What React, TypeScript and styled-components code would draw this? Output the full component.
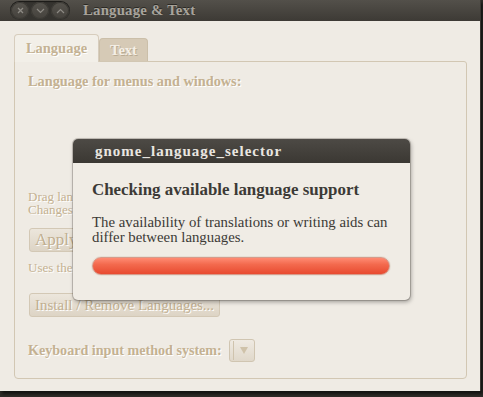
import styled, { createGlobalStyle } from "styled-components";

const GlobalStyle = createGlobalStyle`
  html, body {
    margin: 0;
    padding: 0;
    background: #2f2c28;
  }
  body {
    font-family: "Liberation Serif", "DejaVu Serif", serif;
  }
`;

//#region Window
const Screen = styled.div`
  width: 483px;
  height: 397px;
  position: relative;
  overflow: hidden;
  background: #2f2c28;
`;

const Window = styled.div`
  width: 480px;
  height: 391px;
  background: #efebe4;
  display: flex;
  flex-direction: column;
  border-right: 1px solid #3a3631;
  box-shadow: 2px 3px 3px rgba(0, 0, 0, 0.6);
`;

const TitleBar = styled.div`
  height: 21px;
  flex-shrink: 0;
  background: linear-gradient(#53504a, #3d3a35);
  display: flex;
  align-items: center;
  padding-left: 10px;
  gap: 13px;
`;

const ButtonGroup = styled.div`
  display: flex;
  gap: 2px;
  padding: 1px;
  border-radius: 10px;
  background: #35332f;
  box-shadow: inset 0 1px 1px rgba(0, 0, 0, 0.5);
`;

const WinButton = styled.div`
  width: 18px;
  height: 17px;
  border-radius: 50%;
  background: linear-gradient(#56534d, #45423d);
  box-shadow: inset 0 0 0 1px #3b3934;
  display: flex;
  align-items: center;
  justify-content: center;
`;

const WinTitle = styled.span`
  font-size: 14.8px;
  font-weight: bold;
  color: #a8a49c;
  text-shadow: 0 -1px 0 #2a2824;
  letter-spacing: 0.2px;
`;

const Body = styled.div`
  flex: 1;
  padding: 12px 13px 12px 14px;
  display: flex;
  flex-direction: column;
`;

//#region Notebook
const Tabs = styled.div`
  display: flex;
  align-items: flex-end;
  height: 28px;
  position: relative;
  z-index: 1;
`;

const Tab = styled.div<{ $active?: boolean }>`
  height: ${(p) => (p.$active ? "28px" : "23px")};
  width: ${(p) => (p.$active ? "85px" : "49px")};
  justify-content: center;
  box-sizing: border-box;
  display: flex;
  align-items: center;
  font-size: 14.5px;
  font-weight: bold;
  border: 1px solid ${(p) => (p.$active ? "#d7cdbd" : "#cbbfa9")};
  border-bottom: none;
  border-radius: 4px 4px 0 0;
  background: ${(p) => (p.$active ? "#f2efe8" : "#d6cab6")};
  color: ${(p) => (p.$active ? "#c4b293" : "#f4efe6")};
  text-shadow: ${(p) => (p.$active ? "1px 1px 0 #ffffff" : "1px 1px 0 #b9ab93")};
  margin-bottom: ${(p) => (p.$active ? "-1px" : "0")};
`;

const Frame = styled.div`
  flex: 1;
  border: 1px solid #d2c7b3;
  border-radius: 0 3px 4px 4px;
  padding: 11px 13px 14px 13px;
  display: flex;
  flex-direction: column;
  align-items: flex-start;
`;

const Label = styled.div<{ $size?: number }>`
  font-size: ${(p) => p.$size ?? 14.3}px;
  font-weight: bold;
  color: #c4b191;
  text-shadow: 1px 1px 0 #ffffff;
  white-space: nowrap;
`;

const SmallText = styled.div<{ $space?: number }>`
  font-size: 13px;
  line-height: 13px;
  color: #c4b191;
  text-shadow: 1px 1px 0 #ffffff;
  margin-top: ${(p) => p.$space ?? 0}px;
`;

const FakeButton = styled.div<{ $space?: number }>`
  margin-top: ${(p) => p.$space ?? 0}px;
  margin-left: 1px;
  height: 24px;
  box-sizing: border-box;
  padding: 0 5px;
  display: flex;
  align-items: center;
  border: 1px solid #d3c8b5;
  border-radius: 3px;
  background: linear-gradient(#ece6dc, #ddd4c5);
  font-size: 15px;
  color: #c1af90;
  text-shadow: 1px 1px 0 #ffffff;
`;

const BigButtonText = styled.span`
  font-size: 17px;
`;

const ComboRow = styled.div`
  margin-top: 22px;
  display: flex;
  align-items: center;
  gap: 7px;
`;

const Combo = styled.div`
  width: 26px;
  height: 23px;
  box-sizing: border-box;
  border: 1px solid #d0c5b1;
  border-radius: 3px;
  background: linear-gradient(#efeae2, #e0d8ca);
  display: flex;
  align-items: center;
  justify-content: flex-end;
  padding-right: 6px;
  position: relative;
  &::before {
    content: "";
    position: absolute;
    left: 3px;
    top: 1px;
    bottom: 1px;
    border-left: 1px solid #cfc3ad;
  }
`;

const Arrow = styled.div`
  width: 0;
  height: 0;
  border-left: 4px solid transparent;
  border-right: 4px solid transparent;
  border-top: 7px solid #cfc2a9;
`;

//#region Dialog
const Dialog = styled.div`
  position: absolute;
  left: 73px;
  top: 139px;
  width: 337px;
  height: 161px;
  background: #f0ece5;
  border-radius: 5px;
  box-shadow: 0 0 0 1px rgba(70, 64, 55, 0.25), 1px 2px 4px rgba(0, 0, 0, 0.35);
  overflow: hidden;
  display: flex;
  flex-direction: column;
`;

const DialogTitle = styled.div`
  height: 24px;
  flex-shrink: 0;
  background: linear-gradient(#4d4a45, #3b3833);
  display: flex;
  align-items: center;
  padding-left: 22px;
  font-size: 15px;
  font-weight: bold;
  color: #e9e6e0;
  letter-spacing: 1px;
`;

const DialogBody = styled.div`
  padding: 17px 19px 0 19px;
  display: flex;
  flex-direction: column;
`;

const Heading = styled.div`
  font-size: 16.9px;
  font-weight: bold;
  color: #3c3a36;
  white-space: nowrap;
`;

const Message = styled.div`
  margin-top: 15px;
  font-size: 14.8px;
  line-height: 15px;
  color: #3c3a36;
  white-space: nowrap;
`;

const Progress = styled.div`
  margin-top: 12px;
  width: 298px;
  height: 18px;
  box-sizing: border-box;
  border-radius: 9px;
  border: 1px solid #d79a8a;
  background: linear-gradient(#ff8b73 0%, #f36a4e 40%, #e84a30 100%);
  box-shadow: 0 0 0 1px #e6dfd5;
`;

function App() {
  return (
    <>
      <GlobalStyle />
      <Screen>
        <Window>
          <TitleBar>
            <ButtonGroup>
              <WinButton>
                <svg width="7" height="7" viewBox="0 0 7 7">
                  <path d="M1 1L6 6M6 1L1 6" stroke="#8d8a84" strokeWidth="1.3" />
                </svg>
              </WinButton>
              <WinButton>
                <svg width="9" height="6" viewBox="0 0 9 6">
                  <path d="M1 1L4.5 4.5L8 1" stroke="#8d8a84" strokeWidth="1.2" fill="none" />
                </svg>
              </WinButton>
              <WinButton>
                <svg width="9" height="6" viewBox="0 0 9 6">
                  <path d="M1 5L4.5 1.5L8 5" stroke="#8d8a84" strokeWidth="1.2" fill="none" />
                </svg>
              </WinButton>
            </ButtonGroup>
            <WinTitle>Language &amp; Text</WinTitle>
          </TitleBar>
          <Body>
            <Tabs>
              <Tab $active>Language</Tab>
              <Tab>Text</Tab>
            </Tabs>
            <Frame>
              <Label>Language for menus and windows:</Label>
              <SmallText $space={100}>
                Drag languages to arrange them in order of preference.
                <br />
                Changes take effect next time you log in.
              </SmallText>
              <FakeButton $space={12}>
                <BigButtonText>Apply System-Wide</BigButtonText>
              </FakeButton>
              <SmallText $space={9}>Uses the same language for the login screen.</SmallText>
              <FakeButton $space={19}>Install / Remove Languages...</FakeButton>
              <ComboRow>
                <Label $size={14.1}>Keyboard input method system:</Label>
                <Combo>
                  <Arrow />
                </Combo>
              </ComboRow>
            </Frame>
          </Body>
        </Window>
        <Dialog>
          <DialogTitle>gnome_language_selector</DialogTitle>
          <DialogBody>
            <Heading>Checking available language support</Heading>
            <Message>
              The availability of translations or writing aids can
              <br />
              differ between languages.
            </Message>
            <Progress />
          </DialogBody>
        </Dialog>
      </Screen>
    </>
  );
}

export default App;
